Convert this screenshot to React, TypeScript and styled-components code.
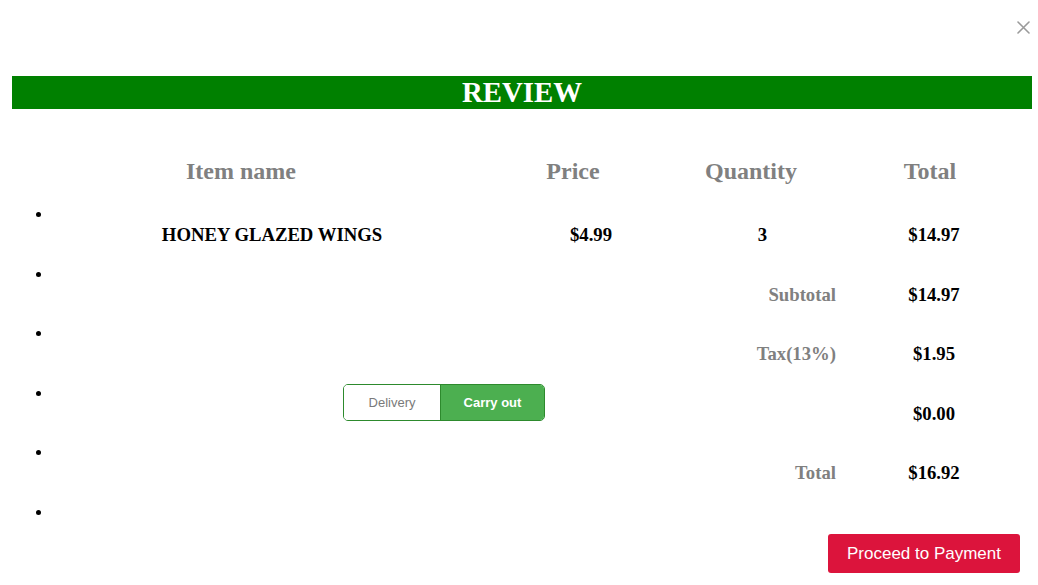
import React from "react";
import styled, { createGlobalStyle } from "styled-components";

const GlobalStyle = createGlobalStyle`
  html, body { margin: 0; padding: 0; background: #ffffff; }
  body { font-family: "Liberation Serif", "Times New Roman", serif; }
`;

const Page = styled.div`
  padding: 0 6px 0 12px;
`;

const CloseRow = styled.div`
  height: 76px;
  display: flex;
  justify-content: flex-end;
  align-items: flex-start;
`;

const CloseButton = styled.button`
  margin: 20px 2px 0 0;
  padding: 0;
  width: 14px;
  height: 14px;
  border: none;
  background: transparent;
  display: flex;
  align-items: center;
  justify-content: center;
  cursor: pointer;
`;

const Title = styled.h1`
  margin: 0;
  height: 33px;
  line-height: 33px;
  background: #008000;
  color: #ffffff;
  text-align: center;
  font-size: 28.8px;
  font-weight: bold;
`;

const cols = "448px 190px 153px 190px";

const HeaderGrid = styled.div`
  margin-top: 29px;
  display: grid;
  grid-template-columns: 458px 206px 150px 208px;
`;

const HeadCell = styled.h2`
  margin: 0;
  padding: 20px 0;
  font-size: 24px;
  line-height: 27.6px;
  font-weight: bold;
  color: #808080;
  text-align: center;
`;

const List = styled.ul`
  margin: 0;
  padding: 0;
  list-style: none;
`;

const Item = styled.li`
  display: grid;
  grid-template-columns: 36px ${cols};
  min-height: 20px;
`;

const Bullet = styled.span`
  grid-column: 1;
  align-self: start;
  justify-self: start;
  margin: 6.5px 0 0 23.5px;
  width: 5px;
  height: 5px;
  border-radius: 50%;
  background: #000000;
`;

const Cell = styled.h3<{ $muted?: boolean; $align?: string }>`
  margin: 0;
  padding: 18.5px 0 19.5px;
  font-size: 18.72px;
  line-height: 21.5px;
  font-weight: bold;
  color: ${(p) => (p.$muted ? "#808080" : "#000000")};
  text-align: ${(p) => p.$align || "center"};
`;

const LabelCell = styled(Cell)`
  grid-column: 2 / span 3;
  padding-right: 3px;
`;

const ToggleCell = styled.div`
  grid-column: 2 / span 3;
  justify-self: center;
  align-self: start;
  margin-left: 1px;
`;

const Toggle = styled.div`
  display: flex;
  border: 1px solid #2d8a2d;
  border-radius: 5px;
  overflow: hidden;
  height: 35px;
`;

const ToggleOption = styled.button<{ $active?: boolean; $w: number }>`
  box-sizing: border-box;
  width: ${(p) => p.$w}px;
  height: 35px;
  margin: 0;
  padding: 0;
  border: none;
  border-right: ${(p) => (p.$active ? "none" : "1px solid #2d8a2d")};
  background: ${(p) => (p.$active ? "#4caf50" : "#ffffff")};
  color: ${(p) => (p.$active ? "#ffffff" : "#7a7a7a")};
  font-family: "Liberation Sans", Arial, sans-serif;
  font-size: 13px;
  font-weight: ${(p) => (p.$active ? "bold" : "normal")};
  cursor: pointer;
`;

const Footer = styled.div`
  display: flex;
  justify-content: flex-end;
  margin-top: 11px;
  padding-right: 12px;
`;

const PayButton = styled.button`
  height: 39px;
  padding: 0 19px;
  border: none;
  border-radius: 3px;
  background: #dc143c;
  color: #ffffff;
  font-family: "Liberation Sans", Arial, sans-serif;
  font-size: 17px;
  cursor: pointer;
`;

export default function App() {
  return (
    <>
      <GlobalStyle />
      <Page>
        <CloseRow>
          <CloseButton aria-label="Close">
            <svg width="13" height="13" viewBox="0 0 13 13">
              <path d="M1 1 L12 12 M12 1 L1 12" stroke="#9a9a9a" strokeWidth="1.6" strokeLinecap="round" />
            </svg>
          </CloseButton>
        </CloseRow>
        <Title>REVIEW</Title>
        <HeaderGrid>
          <HeadCell>Item name</HeadCell>
          <HeadCell>Price</HeadCell>
          <HeadCell>Quantity</HeadCell>
          <HeadCell>Total</HeadCell>
        </HeaderGrid>
        <List>
          <Item>
            <Bullet />
            <Cell>HONEY GLAZED WINGS</Cell>
            <Cell>$4.99</Cell>
            <Cell>3</Cell>
            <Cell>$14.97</Cell>
          </Item>
          <Item>
            <Bullet />
            <LabelCell $muted $align="right">Subtotal</LabelCell>
            <Cell>$14.97</Cell>
          </Item>
          <Item>
            <Bullet />
            <LabelCell $muted $align="right">Tax(13%)</LabelCell>
            <Cell>$1.95</Cell>
          </Item>
          <Item>
            <Bullet />
            <ToggleCell>
              <Toggle>
                <ToggleOption $w={97}>Delivery</ToggleOption>
                <ToggleOption $w={103} $active>Carry out</ToggleOption>
              </Toggle>
            </ToggleCell>
            <Cell>$0.00</Cell>
          </Item>
          <Item>
            <Bullet />
            <LabelCell $muted $align="right">Total</LabelCell>
            <Cell>$16.92</Cell>
          </Item>
          <Item>
            <Bullet />
          </Item>
        </List>
        <Footer>
          <PayButton>Proceed to Payment</PayButton>
        </Footer>
      </Page>
    </>
  );
}
